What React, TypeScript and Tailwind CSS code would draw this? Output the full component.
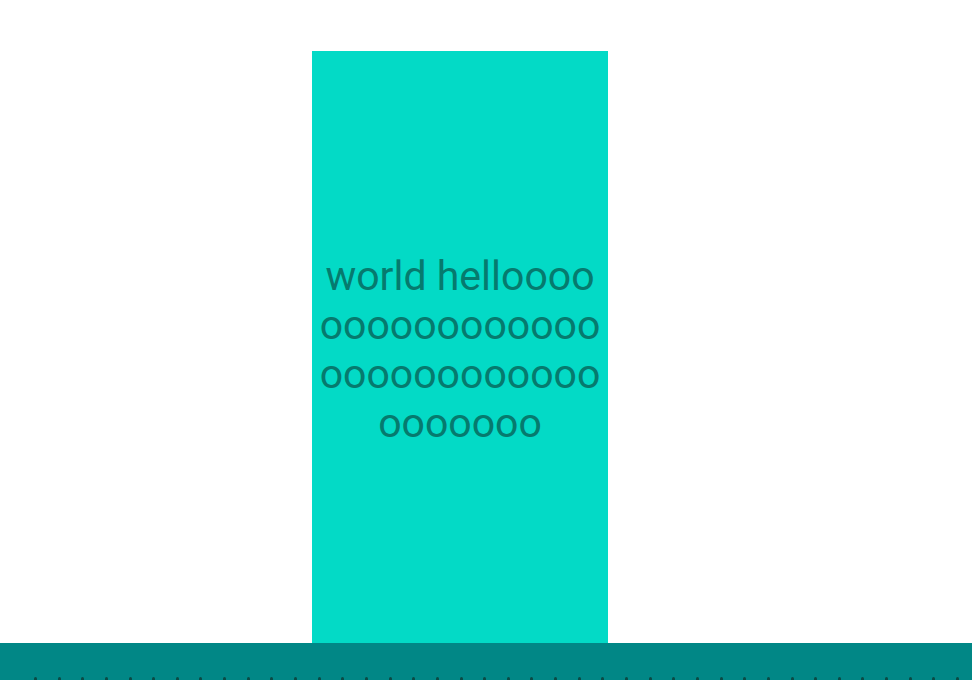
export default function App() {
    const dots = Array.from({ length: 40 }, (_, i) => i);

    return (
        <div className="h-[680px] w-[972px] bg-white flex flex-col overflow-hidden" style={{ fontFamily: 'Roboto, "Liberation Sans", sans-serif' }}>
            {/* Card area */}
            <div className="flex-1 pt-[51px] pl-[312px] flex">
                <div className="w-[296px] h-full bg-[#03dac6] flex items-center justify-center px-[7px] pt-[6px]">
                    <p className="text-center text-[41px] leading-[49px] text-[#067a6e] break-all">
                        world hellooooooooooooooooooooooooooooooooooo
                    </p>
                </div>
            </div>

            {/* Bottom bar */}
            <div className="h-[37px] bg-[#018786] flex flex-col justify-end overflow-hidden">
                <div className="flex justify-between pl-[34px] pr-[13px] h-[3px]">
                    {dots.map((d) => (
                        <div key={d} className="w-[3px] h-[6px] rounded-full bg-[#0b4a45]" />
                    ))}
                </div>
            </div>
        </div>
    );
}
